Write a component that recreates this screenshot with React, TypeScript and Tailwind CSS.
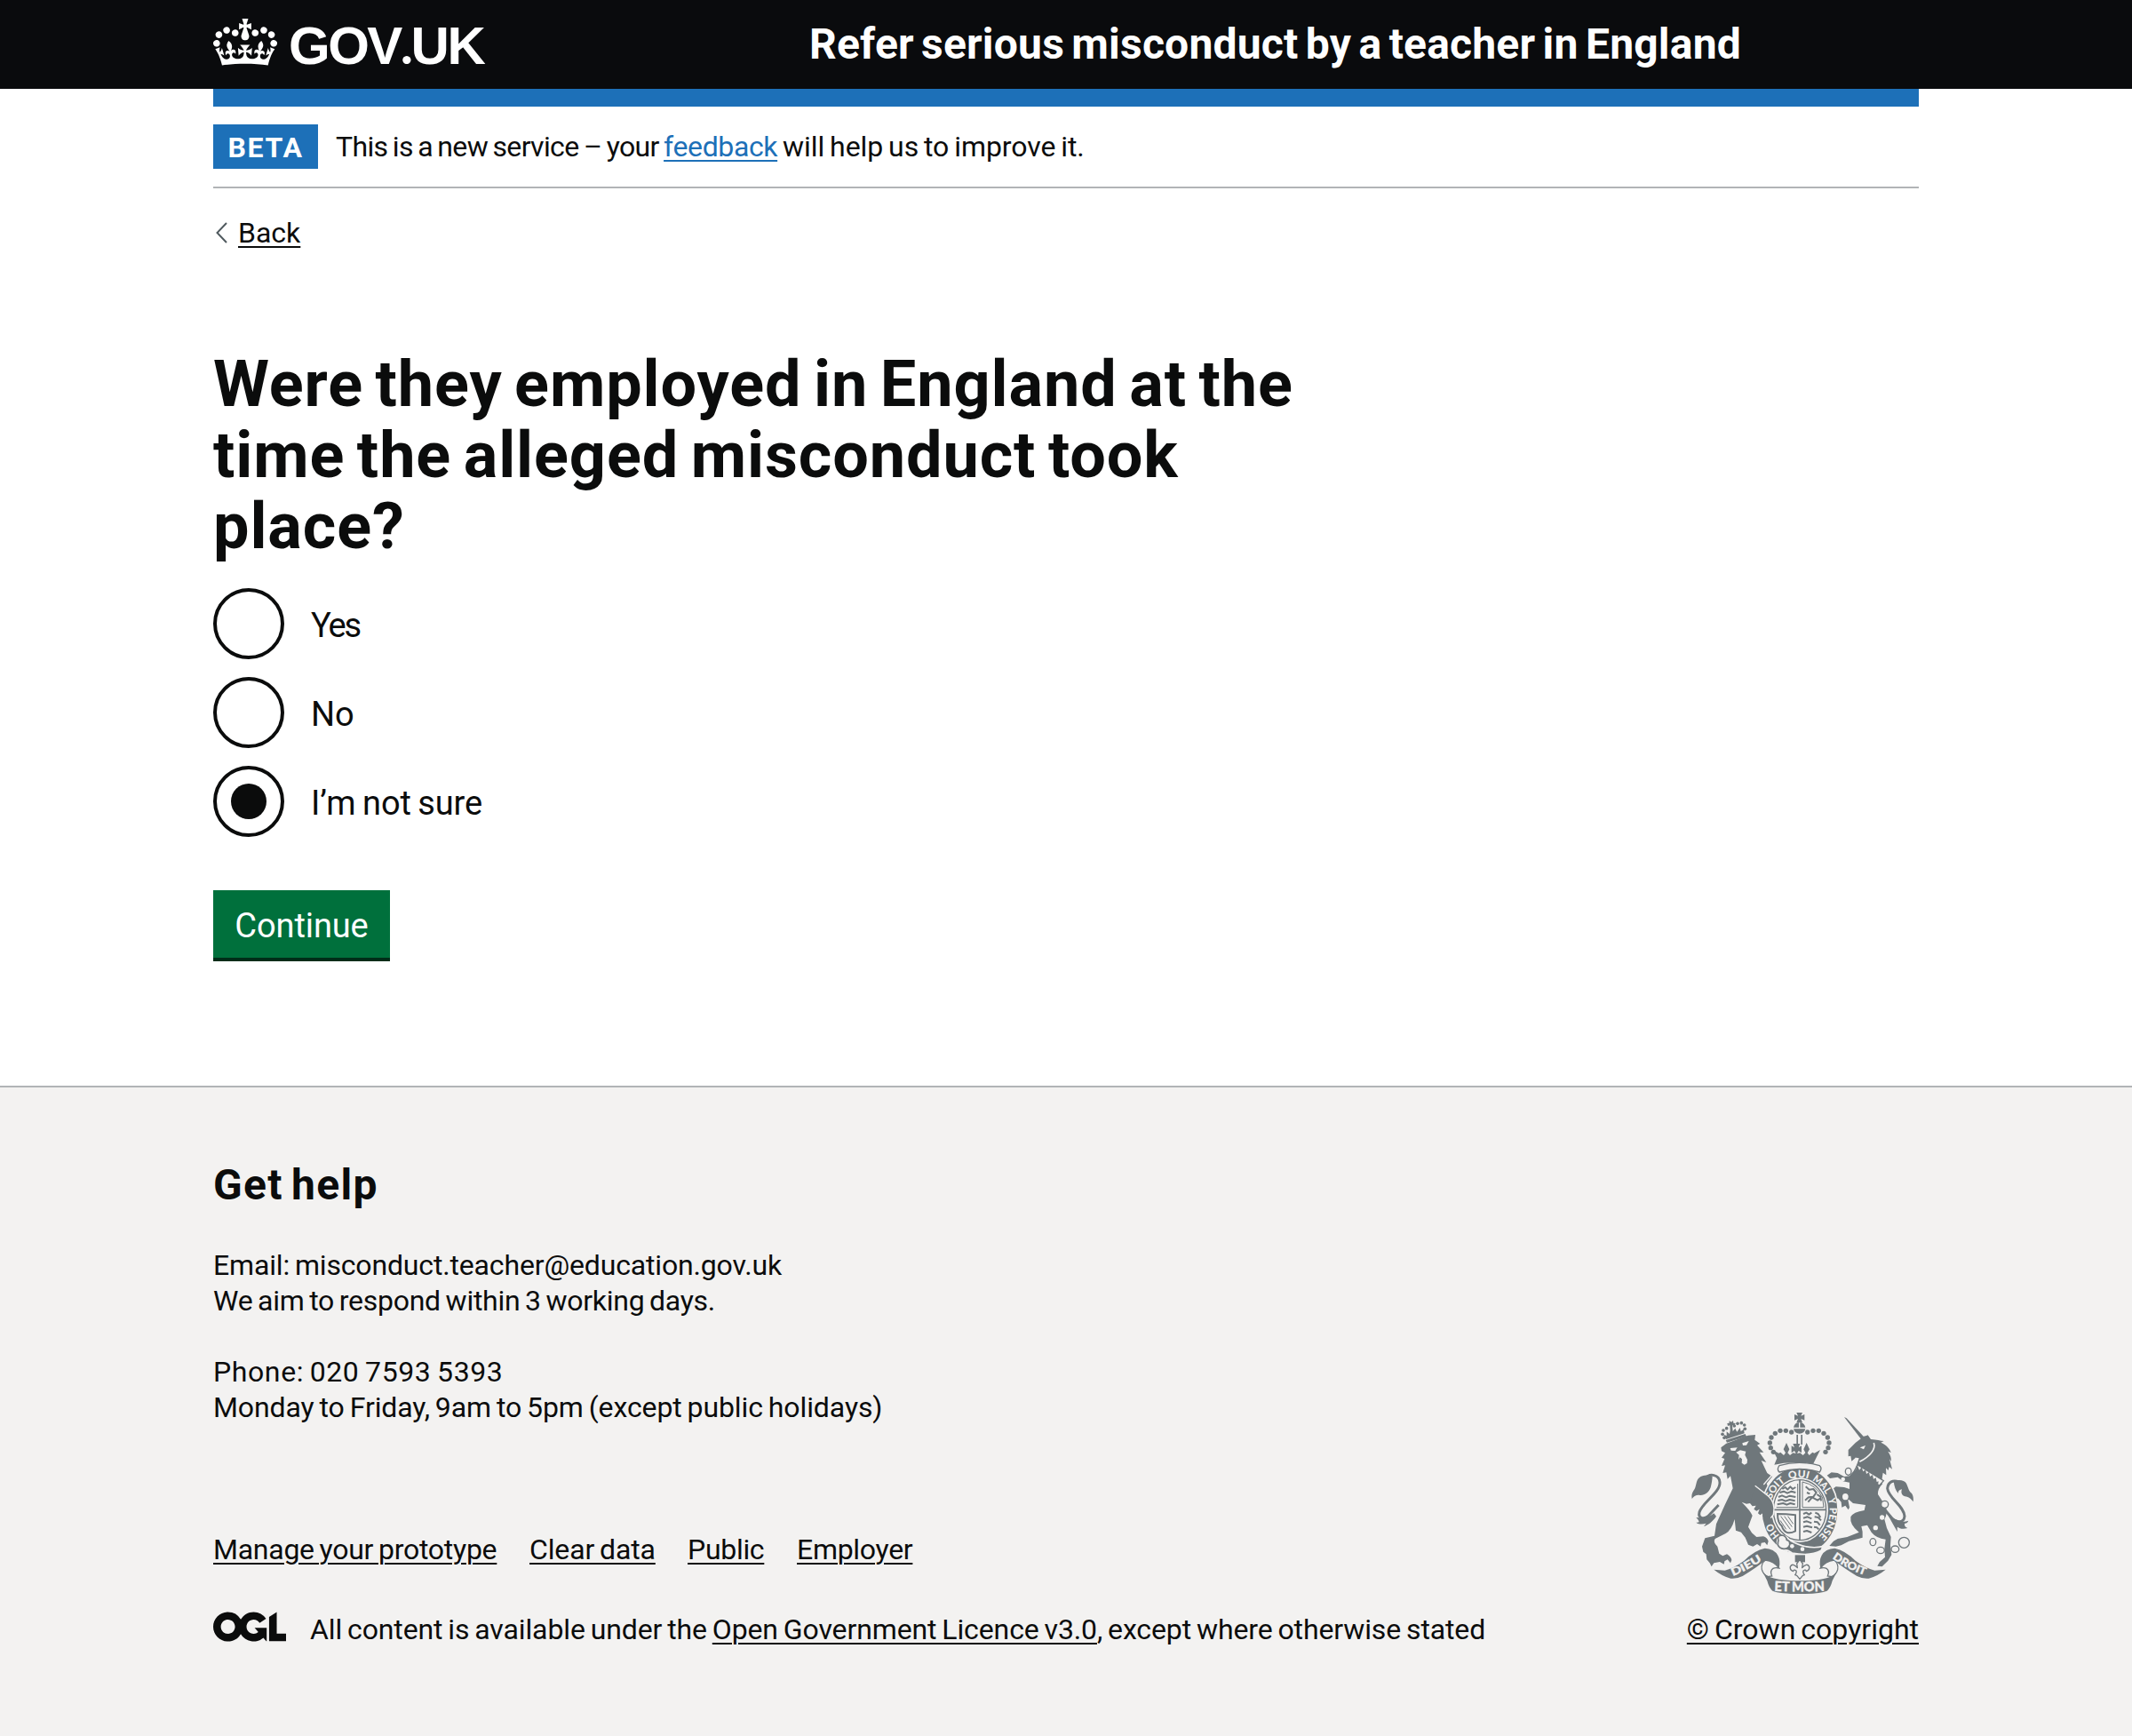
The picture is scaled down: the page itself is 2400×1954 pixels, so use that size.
import type { ReactNode } from "react";

function Crown() {
  return (
    <svg className="mt-[21px] block h-[53px] w-[72px] fill-white" viewBox="0 0 132 97" aria-hidden="true">
      <path
        fillRule="evenodd"
        d="M25 30.2c3.5 1.5 7.7-.2 9.1-3.7 1.5-3.6-.2-7.8-3.9-9.2-3.6-1.4-7.6.3-9.1 3.9-1.4 3.5.3 7.5 3.9 9zM9 39.5c3.6 1.5 7.8-.2 9.2-3.7 1.5-3.6-.2-7.8-3.9-9.1-3.6-1.5-7.6.2-9.1 3.8-1.4 3.5.3 7.5 3.8 9zM4.4 57.2c3.5 1.5 7.7-.2 9.1-3.8 1.5-3.6-.2-7.7-3.9-9.1-3.5-1.5-7.6.3-9.1 3.8-1.4 3.5.3 7.6 3.9 9.1zm38.3-21.4c3.5 1.5 7.7-.2 9.1-3.8 1.5-3.6-.2-7.7-3.9-9.1-3.6-1.5-7.6.3-9.1 3.8-1.3 3.6.4 7.7 3.9 9.1zm64.4-5.6c-3.6 1.5-7.8-.2-9.1-3.7-1.5-3.6.2-7.8 3.8-9.2 3.6-1.4 7.7.3 9.2 3.9 1.3 3.5-.4 7.5-3.9 9zm15.9 9.3c-3.6 1.5-7.7-.2-9.1-3.7-1.5-3.6.2-7.8 3.7-9.1 3.6-1.5 7.7.2 9.2 3.8 1.5 3.5-.3 7.5-3.8 9zm4.7 17.7c-3.6 1.5-7.8-.2-9.2-3.8-1.5-3.6.2-7.7 3.9-9.1 3.6-1.5 7.7.3 9.2 3.8 1.3 3.5-.4 7.6-3.9 9.1zM89.3 35.8c-3.6 1.5-7.8-.2-9.2-3.8-1.4-3.6.2-7.7 3.9-9.1 3.6-1.5 7.7.3 9.2 3.8 1.4 3.6-.3 7.7-3.9 9.1zM69.7 17.7l8.9 4.7V9.3l-8.9 2.8c-.2-.3-.5-.6-.9-.9L72.4 0H59.6l3.5 11.2c-.3.3-.6.5-.9.9l-8.8-2.8v13.1l8.8-4.7c.3.3.6.7.9.9l-5 15.4v.1c-.2.8-.4 1.6-.4 2.4 0 4.1 3.1 7.5 7 8.1h.2c.3 0 .7.1 1 .1.4 0 .7 0 1-.1h.2c4-.6 7.1-4.1 7.1-8.1 0-.8-.1-1.7-.4-2.4V34l-5.1-15.4c.4-.2.7-.6 1-.9zM66 92.8c16.9 0 32.8 1.1 47.1 3.2 4-16.9 8.9-26.7 14-33.5l-9.6-3.4c1 4.9 1.1 7.2 0 10.2-1.5-1.4-3-4.3-4.2-8.7L108.6 76c2.8-2 5-3.2 7.5-3.3-4.4 9.4-10 11.9-13.6 11.2-4.3-.8-6.3-4.6-5.6-7.9 1-4.7 5.7-5.9 8-.5 4.3-8.7-3-11.4-7.6-8.8 7.1-7.2 7.9-13.5 2.1-21.1-8 6.1-8.1 12.3-4.5 20.8-4.7-5.4-12.1-2.5-9.5 6.2 3.4-5.2 7.9-2 7.2 3.1-.6 4.3-6.4 7.8-13.5 7.2-10.3-.9-10.9-8-11.2-13.8 2.5-.5 7.1 1.8 11 7.3L80.2 60c-4.1 4.4-8 5.3-12.3 5.4 1.4-4.4 8-11.6 8-11.6H55.5s6.4 7.2 7.9 11.6c-4.2-.1-8-1-12.3-5.4l1.4 16.4c3.9-5.5 8.5-7.7 10.9-7.3-.3 5.8-.9 12.8-11.1 13.8-7.2.6-12.9-2.9-13.5-7.2-.7-5 3.8-8.3 7.1-3.1 2.7-8.7-4.6-11.6-9.4-6.2 3.7-8.5 3.6-14.7-4.6-20.8-5.8 7.6-5 13.9 2.2 21.1-4.7-2.6-11.9.1-7.7 8.8 2.3-5.5 7.1-4.2 8.1.5.7 3.3-1.3 7.1-5.7 7.9-3.5.7-9-1.8-13.5-11.2 2.5.1 4.7 1.3 7.5 3.3l-4.7-15.4c-1.2 4.4-2.7 7.2-4.3 8.7-1.1-3-.9-5.3 0-10.2l-9.5 3.4c5 6.9 9.9 16.7 14 33.5 14.8-2.1 30.8-3.2 47.7-3.2z"
      />
    </svg>
  );
}

function OglLogo() {
  return (
    <svg className="block h-[34px] w-[82px] shrink-0 fill-[#0b0c0c]" viewBox="0 0 483.2 195.7" aria-hidden="true">
      <path d="M421.5 142.8V.1l-50.7 32.3v161.1h112.4v-50.7zm-122.3-9.6A47.12 47.12 0 0 1 221 97.8c0-26 21.1-47.1 47.1-47.1 16.7 0 31.4 8.7 39.7 21.8l42.7-27.2A97.63 97.63 0 0 0 268.1 0c-36.5 0-68.3 20.1-85.1 49.7A98 98 0 0 0 97.8 0C43.9 0 0 43.9 0 97.8s43.9 97.8 97.8 97.8c36.5 0 68.3-20.1 85.1-49.7a97.76 97.76 0 0 0 149.6 25.4l19.4 22.2h3v-87.8h-80l24.3 27.5zM97.8 145c-26 0-47.1-21.1-47.1-47.1s21.1-47.1 47.1-47.1 47.1 21.1 47.1 47.1S123.8 145 97.8 145" />
    </svg>
  );
}

const F = "#6f777b";
const B = "#f3f2f1";

const crownPearls: [number, number][] = [
  [410, 126], [391, 121], [372, 121], [355, 130], [342, 144], [337, 162], [340, 179], [349, 193],
];
const lionPearls: [number, number][] = [
  [183, 145], [177, 133], [180, 120], [191, 113], [217, 105], [228, 97], [241, 95], [251, 102], [253, 115],
];
const chainLinks: [number, number, number, number][] = [
  [602, 259, 10, 12], [592, 344, 12, 13], [725, 370, 12, 12], [685, 497, 10, 12],
  [711, 525, 13, 11], [760, 521, 13, 11], [790, 499, 18, 18],
];
const motto: [string, string, number][] = [
  ["HO", "15%", 50], ["SOIT", "36.5%", 78], ["QUI", "49.5%", 66], ["MAL", "61.5%", 68], ["Y", "70.5%", 20], ["PENSE", "81.5%", 108],
];

function CoatOfArms() {
  return (
    <svg className="block h-[204px] w-[250px]" viewBox="72 60 750 612" aria-hidden="true" textRendering="geometricPrecision">
      <defs>
        <path id="garter" d="M438 503A101 112 0 0 1 438 279A101 112 0 0 1 438 503" />
        <path id="ribbon-left" d="M212 612Q262 592 316 556" />
        <path id="ribbon-mid" d="M352 662Q437 666 524 662" />
        <path id="ribbon-right" d="M548 552Q600 590 664 612" />
      </defs>

      {/* Lion */}
      <g fill={F}>
        {lionPearls.map(([x, y]) => (
          <circle key={`${x}-${y}`} cx={x} cy={y} r="5.5" />
        ))}
        <path d="M200 88l7 4 6-5 1 8 7 1-4 8-7-1 2 20 8-10 6 12 10-14 3 12 10-7 2 14-62 20-9-16 11 4 0-14 10 8 2-12-1-17-7 2-2-9 7-1z" />
        <path d="M188 153l66-21 4 9-66 20z" />
        <path d="M172 178L190 164L263 137L288 135L286 152L304 165L294 170L316 194L302 194L325 228L308 222L328 264L345 276L326 300L342 338L350 380L270 366L258 368L242 362Q272 392 278 408Q272 424 264 446L276 466L292 480L315 478Q328 482 332 494L328 508L320 498L308 500L306 512L294 504L280 512L264 506L254 482L240 464L222 458L218 420Q208 456 188 468L152 486Q144 498 160 512L166 536L178 544L192 538Q206 546 208 558L204 568L194 556L184 562L182 572L168 564L148 568L140 580L134 568L124 556L122 538L112 530L108 512L118 484L150 476L156 436L186 370L212 316L204 274L194 284L190 262L178 264L186 238L174 240L184 216L174 212L186 196L174 190z" />
      </g>
      <g fill={B}>
        <path d="M203 180l24-2-7 11-14-1z" />
        <path d="M244 163l22-7-8 14-12 1z" />
        <path d="M223 194l14-7 19 4-3 12 8 16-1 12-9 5-9-6 1-13-7-6-5 8 2-16z" />
      </g>

      {/* Lion tail */}
      <path d="M118 284C134 262 166 270 168 295C170 330 110 362 99 396C94 416 112 422 128 410L164 372" fill="none" stroke={F} strokeWidth="9" />
      <path d="M134 270c-18 2-28 2-38 12-10 12-6 28-17 42-6 9-7 18-5 27 8-10 16-14 27-12 16 1 31-10 36-26 4-14 5-26 6-36z" fill={F} />
      <path d="M148 400c-16 14-34 18-60 14 6 6 9 10 10 16-4 1-6 2-10 1 10 8 24 6 34 3l-8 10c14-4 30-16 42-34z" fill={F} />

      {/* Unicorn */}
      <path d="M588 75l8 4 69 74-11 8z" fill={F} />
      <g fill={F}>
        <path d="M668 136l10 14c20 2 32 5 44 6l-10 5c18 8 30 20 34 34l-10-4c9 14 12 22 10 34l-5-9 9 35-10-8-3 12-8-8 1 24-11-8-4 26-87-45 10-30-22-4 9-10 0 14-12 10-3-18-8 2 0-22 24-24 28-22 9-2z" />
        <path d="M626 250L718 300Q700 318 702 336L728 376Q736 400 724 420L732 450L746 480L744 508L748 540L736 560L716 580L700 578L708 564L726 548L724 520L728 488Q696 484 680 464L666 440L646 444Q652 462 650 482L604 494L578 508L560 512L538 510L552 494L566 486L598 480L638 464Q606 440 610 412Q618 396 656 390L660 372L618 366L600 350L606 380L602 388L592 374L580 380L578 362L568 350L556 348L544 322L560 310L588 312L606 318L606 296L584 292L566 278L540 282L530 272L545 262L566 264L588 276L606 274z" />
      </g>
      <path d="M688 162c8 22-14 46-48 64" fill="none" stroke={B} strokeWidth="5" />
      <path d="M641 178l19-7-6 13z" fill={B} />
      <path d="M633 236l88 54-14 16-84-50z" fill={B} stroke={F} strokeWidth="4" />
      <path d="M625 258l8-20 6 16 8-10 5 15 8-6 3 14 9-6 3 15 9-6 3 14 8-4 3 14 6-2-2 14z" fill={F} />
      {chainLinks.map(([x, y, rx, ry]) => (
        <ellipse key={`${x}-${y}`} cx={x} cy={y} rx={rx} ry={ry} fill={B} stroke={F} strokeWidth="4" />
      ))}
      <g fill={B}>
        <circle cx="716" cy="414" r="8" />
        <circle cx="694" cy="449" r="8" />
        <circle cx="584" cy="285" r="7" />
      </g>

      {/* Unicorn tail */}
      <path d="M772 294C754 286 736 294 734 316C738 350 790 374 792 410C790 432 764 438 742 408L722 384" fill="none" stroke={F} strokeWidth="9" />
      <path d="M755 291c18-6 36-4 43 8 7 14 6 22 16 32 6 6 9 16 7 30-8-10-14-16-28-18-12-4-14-14-10-24-8 2-14 6-12 14-10-10-14-24-16-42z" fill={F} />
      <path d="M738 410c10 16 16 30 30 52 0-8-2-12 0-16 8 6 18 8 34 4-8-3-11-8-10-15 8-2 10-4 13-10-10 4-20 5-30 1z" fill={F} />

      {/* Crown */}
      <g fill={F}>
        {crownPearls.map(([x, y]) => (
          <g key={`${x}-${y}`}>
            <circle cx={x} cy={y} r="8" />
            <circle cx={874 - x} cy={y} r="8" />
          </g>
        ))}
        <path d="M427 60h20l-5 11 12-5v20l-12-5 5 13h-20l5-13-12 5V66l12 5z" />
        <path d="M417 110q4-16 18-17v17zM439 93q15 2 18 17h-18zM417 115h40q-4 16-20 16t-20-16z" />
        <path d="M427 135h5v33h-5zM442 135h5v33h-5z" />
        <path d="M361 214l-14-28 20 11 6-3 11 10 6-8-7-12 10-22 10 22-6 12 8 8 10-8 10 2-5-9-10 7v-24l10 6-5-13h24l-5 13 10-6v24l-10-7-5 9 10-2 10 8 8-8-6-12 10-22 10 22-7 12 6 8 11-10 6 3 20-11-14 28-11 22q-65-14-130 0z" />
      </g>

      {/* Garter and shield */}
      <ellipse cx="438" cy="391" rx="132" ry="150" fill={B} />
      <ellipse cx="438" cy="391" rx="127" ry="146" fill={F} />
      <ellipse cx="438" cy="389" rx="96" ry="109" fill={B} />
      <ellipse cx="438" cy="389" rx="89" ry="102" fill={B} stroke={F} strokeWidth="4" />
      <path d="M369 239q68-20 136 0q10 8 0 22q-68-22-136 0q-10-10 0-22z" fill={B} stroke={F} strokeWidth="4" />
      <path d="M438 285v205M349 388h178" stroke={F} strokeWidth="5" />
      <path d="M431 300v80h-72M447 294v86h72l-4-32q-20-44-68-54" fill="none" stroke={F} strokeWidth="3" />
      <g fill="none" stroke={F} strokeWidth="6" strokeLinejoin="round">
        <path d="M379 318l10-6 8 8 9-10 8 8 10-6M370 330l14-4 12 6 14-6 14 4M366 345l12-5 14 6 12-5 20 4M364 357l14-3 12 5 14-5 18 4M362 370l20-4 12 5 12-5 16 4" />
        <path d="M450 402l10-4 9 6 9-6M450 416l14-4 14 6M450 430l12-3 16 6M450 446l12-3 18 5M450 462l12-3 16 6M490 398l10 4 8 12M488 412l12 2 10 10M486 428l12 2 8 10M486 446l10 2 6 6" />
        <path d="M458 310l12 10 14-2 10 12-10 14-16 2-12 10M466 362l14-16 18 10 12-8M462 330l10 4M496 336l12 8 2 14" />
      </g>
      <path d="M363 402q28 0 60 4v54q-34 18-46-18-14-10-14-40z" fill="none" stroke={F} strokeWidth="6" />
      <path d="M374 410l32 44M386 410l26 36M398 410l18 26M372 424l20 30" stroke={F} strokeWidth="3" />
      <g fill={B} fontFamily="Lato, sans-serif" fontWeight="900" fontSize="34" textAnchor="middle">
        {motto.map(([word, offset, length]) => (
          <text key={word}>
            <textPath href="#garter" startOffset={offset} textLength={length} lengthAdjust="spacingAndGlyphs">
              {word}
            </textPath>
          </text>
        ))}
      </g>

      {/* Buckle and strap */}
      <path d="M362 500q-2-20 16-24 16 0 24 14 58 34 114 22l-6 14q-36 20-98 8-14-10-26-10-20 0-24-24z" fill={F} stroke={B} strokeWidth="5" />
      <path d="M366 492q-6-16 12-18 14 2 16 16 12 2 10 16-4 14-20 14-16-2-20-14 0-10 2-14z" fill={B} stroke={F} strokeWidth="5" />
      <circle cx="412" cy="511" r="7" fill={B} />
      <circle cx="447" cy="521" r="7" fill={B} />

      {/* Lion arm over the garter */}
      <path d="M287 307L322 334Q348 352 350 384L348 404L340 414L328 408L322 416L312 410L318 396L304 406L297 400L302 386L292 392L283 386L290 374L278 376L270 366Z" fill={F} />
      <path d="M287 307L322 334Q350 352 351 384L349 404L340 416M316 303l26-30" stroke={B} strokeWidth="4" fill="none" />

      {/* Pendant */}
      <path d="M422 541h34v24h-34z" fill={F} />
      <path d="M438 556l10 14-2 14q16-18 24-4 2 12-10 16-2-8-10-2-2 8 4 14l-6 2-10 12-10-12-6-2q6-6 4-14-8-6-10 2-12-4-10-16 8-14 24 4l-2-14z" fill={B} stroke={F} strokeWidth="4" strokeLinejoin="round" />

      {/* Ribbon */}
      {[1, -1].map((side) => (
        <g key={side} transform={side === 1 ? undefined : "translate(876 0) scale(-1 1)"}>
          <path d="M148 590L185 593Q215 585 250 560Q285 525 320 518Q352 520 364 542Q374 560 368 585Q352 562 322 558Q300 578 245 612Q225 622 205 620Q175 612 148 590z" fill={F} />
          <path d="M322 558Q306 570 310 590Q314 606 330 614L344 612Q336 594 348 586Q356 582 368 585Q352 562 322 558z" fill={B} stroke={F} strokeWidth="4" />
          <path d="M311 594Q326 628 439 628V672Q370 672 346 662Q334 652 328 628Z" fill={F} />
        </g>
      ))}
      <g fill={B} stroke={B} strokeWidth="1" fontFamily="Lato, sans-serif" fontWeight="900">
        <text fontSize="36">
          <textPath href="#ribbon-left" textLength="112" lengthAdjust="spacingAndGlyphs">DIEU</textPath>
        </text>
        <text fontSize="46">
          <textPath href="#ribbon-mid" textLength="170" lengthAdjust="spacingAndGlyphs">ET MON</textPath>
        </text>
        <text fontSize="36">
          <textPath href="#ribbon-right" textLength="124" lengthAdjust="spacingAndGlyphs">DROIT</textPath>
        </text>
      </g>
    </svg>
  );
}

function Link({ children, className = "" }: { children: ReactNode; className?: string }) {
  return (
    <a href="#" className={`underline decoration-2 underline-offset-[4px] ${className}`}>
      {children}
    </a>
  );
}

const options = [
  { label: "Yes", spacing: "tracking-[-2.1px]", checked: false },
  { label: "No", spacing: "tracking-normal", checked: false },
  { label: "I’m not sure", spacing: "tracking-[-0.1px]", checked: true },
];

export default function App() {
  return (
    <div className="min-h-[1954px] w-full bg-white font-['Roboto',sans-serif] text-[32px] leading-[40px] text-[#0b0c0c] [word-spacing:-1.9px]">
      <header className="h-[100px] bg-[#0a0b0d] text-white">
        <div className="mx-auto flex w-[1920px]">
          <a href="#" className="flex w-[671px]">
            <Crown />
            <span className="ml-[13px] mt-[19px] font-['Liberation_Sans',sans-serif] text-[60px] font-bold leading-[60px] tracking-[-2.5px]">
              GOV<span className="font-['Lato',sans-serif]">.</span>UK
            </span>
          </a>
          <span className="mt-[20px] whitespace-nowrap text-[48px] font-bold leading-[60px] tracking-[0.2px] [word-spacing:-3.8px]">
            Refer serious misconduct by a teacher in England
          </span>
        </div>
      </header>

      <div className="mx-auto w-[1920px]">
        <div className="h-[20px] bg-[#1d70b8]" />
        <div className="flex border-b-2 border-[#b1b4b6] py-[20px]">
          <strong className="flex h-[50px] w-[118px] items-center justify-center bg-[#1d70b8] pt-px font-bold tracking-[1.7px] text-white">
            BETA
          </strong>
          <p className="ml-[20px] mt-[5px] whitespace-pre">
            <span className="tracking-[-0.65px]">This is a new service – your </span>
            <Link className="tracking-[-0.38px] text-[#1d70b8]">feedback</Link>
            <span className="tracking-[-0.08px]"> will help us to improve it.</span>
          </p>
        </div>

        <a href="#" className="mt-[30px] flex w-max">
          <svg className="ml-[3px] mt-[8px] h-[24px] w-[14px]" viewBox="0 0 14 24" fill="none" stroke="#505a5f" strokeWidth="2">
            <path d="M12 1L1.5 12 12 23" />
          </svg>
          <span className="ml-[11px] underline decoration-2 underline-offset-[4px]">Back</span>
        </a>

        <main>
          <h1 className="mt-[111px] whitespace-nowrap text-[72px] font-bold leading-[80px] tracking-[0.9px] [word-spacing:-5.2px]">
            Were they employed in England at the
            <br />
            time the alleged misconduct took
            <br />
            place?
          </h1>

          <div className="mt-[29px] flex flex-col gap-[20px]">
            {options.map((o) => (
              <label key={o.label} className="flex h-[80px] items-center">
                <span className="flex size-[80px] items-center justify-center rounded-full border-4 border-[#0b0c0c]">
                  {o.checked && <span className="size-[40px] rounded-full bg-[#0b0c0c]" />}
                </span>
                <span className={`ml-[30px] pt-[3px] text-[38px] leading-[50px] ${o.spacing}`}>{o.label}</span>
              </label>
            ))}
          </div>

          <button className="mt-[60px] flex h-[80px] w-[199px] items-center justify-center border-b-4 border-[#002d18] bg-[#00703c] pt-[3px] text-[38px] leading-[50px] tracking-[-0.1px] text-white">
            Continue
          </button>
        </main>
      </div>

      <footer className="mt-[140px] h-[732px] border-t-2 border-[#b1b4b6] bg-[#f3f2f1]">
        <div className="mx-auto flex w-[1920px] items-end justify-between pt-[80px]">
          <div>
            <h2 className="text-[48px] font-bold leading-[60px] tracking-[1.3px] [word-spacing:-4px]">Get help</h2>
            <p className="mt-[40px] tracking-[-0.16px]">Email: misconduct.teacher@education.gov.uk</p>
            <p className="tracking-[-0.28px]">We aim to respond within 3 working days.</p>
            <p className="mt-[40px] tracking-[0.6px]">Phone: 020 7593 5393</p>
            <p className="tracking-[-0.1px]">Monday to Friday, 9am to 5pm (except public holidays)</p>
            <nav className="mt-[120px] flex">
              <Link className="w-[356px] tracking-[-0.26px]">Manage your prototype</Link>
              <Link className="w-[178px] tracking-[-0.14px]">Clear data</Link>
              <Link className="w-[123px] tracking-[-0.3px]">Public</Link>
              <Link className="tracking-[-0.3px]">Employer</Link>
            </nav>
            <div className="mt-[50px] flex">
              <OglLogo />
              <p className="ml-[27px] whitespace-nowrap tracking-[-0.12px]">
                All content is available under the <Link>Open Government Licence v3.0</Link>, except where otherwise stated
              </p>
            </div>
          </div>
          <div className="flex flex-col items-center">
            <CoatOfArms />
            <Link className="mt-[20px]">© Crown copyright</Link>
          </div>
        </div>
      </footer>
    </div>
  );
}
